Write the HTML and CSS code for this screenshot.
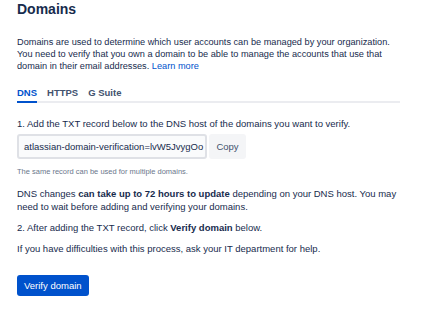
FILE: index.html
```html
<!DOCTYPE html>
<html lang="en">
<head>
    <meta charset="UTF-8">
    <meta name="viewport" content="width=device-width, initial-scale=1.0">
    <title>Domains</title>
    <link rel="stylesheet" href="styles.css">
</head>
<body>
    <div class="page">
        <h1 class="title">Domains</h1>
        <p class="intro">
            Domains are used to determine which user accounts can be managed by your organization.
            You need to verify that you own a domain to be able to manage the accounts that use that
            domain in their email addresses. <a href="#" class="link">Learn more</a>
        </p>

        <div class="tabs">
            <span class="tab active">DNS</span>
            <span class="tab">HTTPS</span>
            <span class="tab">G Suite</span>
        </div>

        <p class="step">1. Add the TXT record below to the DNS host of the domains you want to verify.</p>
        <div class="record-row">
            <div class="record-field">atlassian-domain-verification=lvW5JvygOo</div>
            <button class="copy-btn">Copy</button>
        </div>
        <p class="helper">The same record can be used for multiple domains.</p>

        <p class="note">
            DNS changes <b>can take up to 72 hours to update</b> depending on your DNS host. You may
            need to wait before adding and verifying your domains.
        </p>
        <p class="step step-two">2. After adding the TXT record, click <b>Verify domain</b> below.</p>
        <p class="help">If you have difficulties with this process, ask your IT department for help.</p>

        <button class="verify-btn">Verify domain</button>
    </div>
</body>
</html>
```

FILE: styles.css
```css
body {
    margin: 0;
    padding: 0;
    background-color: #fff;
    font-family: "Liberation Sans", Arial, sans-serif;
    color: #172b4d;
}
.page {
    width: 383px;
    padding: 0 17px;
}
.title {
    margin: 0;
    font-size: 14px;
    line-height: 18px;
    font-weight: bold;
}
.intro {
    margin: 18px 0 0;
    font-size: 9.2px;
    line-height: 12px;
}
.link {
    color: #0052cc;
    text-decoration: none;
}
.tabs {
    display: flex;
    gap: 10px;
    margin-top: 15px;
    border-bottom: 2px solid #ebecf0;
}
.tab {
    font-size: 9.5px;
    line-height: 12px;
    font-weight: bold;
    color: #42526e;
    padding-bottom: 2px;
}
.tab.active {
    color: #0052cc;
    border-bottom: 2px solid #0052cc;
    margin-bottom: -2px;
}
.step {
    margin: 15px 0 0;
    font-size: 9.5px;
    line-height: 12px;
}
.record-row {
    display: flex;
    gap: 2px;
    margin-top: 4px;
}
.record-field {
    box-sizing: border-box;
    width: 190px;
    height: 25px;
    padding: 0 5px;
    border: 2px solid #dfe1e6;
    border-radius: 3px;
    background-color: #fafbfc;
    font-size: 9.5px;
    line-height: 21px;
    white-space: nowrap;
    overflow: hidden;
}
.copy-btn {
    width: 37px;
    height: 25px;
    padding: 0;
    border: none;
    border-radius: 3px;
    background-color: #f4f5f7;
    color: #42526e;
    font-family: inherit;
    font-size: 9.5px;
}
.helper {
    margin: 8px 0 0;
    font-size: 7.5px;
    line-height: 10px;
    color: #6b778c;
}
.note {
    margin: 10px 0 0;
    font-size: 9.5px;
    line-height: 13px;
}
.step-two {
    margin-top: 9px;
}
.help {
    margin: 9px 0 0;
    font-size: 9.5px;
    line-height: 12px;
}
.verify-btn {
    display: block;
    margin-top: 20px;
    height: 21px;
    padding: 0 7px;
    border: none;
    border-radius: 3px;
    background-color: #0052cc;
    color: #fff;
    font-family: inherit;
    font-size: 9.5px;
}
```
